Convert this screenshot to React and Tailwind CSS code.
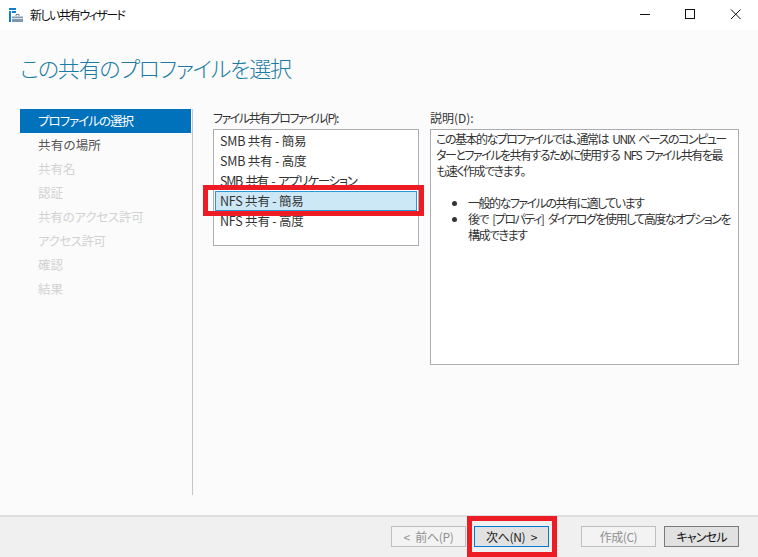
import React from 'react';

const font = { fontFamily: '"Noto Sans CJK JP", "Noto Sans", sans-serif' };

const steps = [
    { label: 'プロファイルの選択', cls: 'bg-[#0072bc] text-white tracking-[-1px]' },
    { label: '共有の場所', cls: 'text-[#555555] tracking-[0.2px]' },
    { label: '共有名', cls: 'text-[#d2d2d2]' },
    { label: '認証', cls: 'text-[#d2d2d2]' },
    { label: '共有のアクセス許可', cls: 'text-[#d2d2d2] tracking-[-0.2px]' },
    { label: 'アクセス許可', cls: 'text-[#d2d2d2] tracking-[-0.5px]' },
    { label: '確認', cls: 'text-[#d2d2d2]' },
    { label: '結果', cls: 'text-[#d2d2d2]' },
];

const profiles = [
    { label: 'SMB 共有 - 簡易', cls: 'tracking-[-0.2px]' },
    { label: 'SMB 共有 - 高度', cls: 'tracking-[-0.2px]' },
    { label: 'SMB 共有 - アプリケーション', cls: 'tracking-[-1.3px] [word-spacing:2px]' },
    { label: 'NFS 共有 - 簡易', cls: 'tracking-[-0.2px]' },
    { label: 'NFS 共有 - 高度', cls: 'tracking-[-0.2px]' },
];

const WizardIcon = () => (
    <svg width="15" height="15" viewBox="0 0 15 15" className="shrink-0">
        <rect x="0" y="0" width="7" height="2" fill="#0f7fd0" />
        <rect x="0" y="3" width="2" height="11" fill="#0f7fd0" />
        <rect x="3" y="3" width="4" height="2" fill="#0f7fd0" />
        <path d="M3 8.5 L14 8.5 L14 14 L3 14 Z" fill="#8098ad" />
        <path d="M7 8 V6.5 H10 V8" fill="none" stroke="#6d8498" strokeWidth="1" />
        <rect x="3" y="10" width="11" height="1" fill="#dce4ea" />
    </svg>
);

const Btn = ({ children, variant, className = '' }) => {
    const styles = {
        disabled: 'border-[#bfbfbf] bg-[#f3f3f3] text-[#8f8f8f]',
        focus: 'border-[#0078d7] bg-[#e1e1e1] text-[#222222]',
        normal: 'border-[#7a7a7a] bg-[#e1e1e1] text-[#111111]',
    };
    return (
        <div className={`w-[75px] h-[21px] flex items-center justify-center border text-[12px] ${styles[variant]} ${className}`}>
            {children}
        </div>
    );
};

export default function App() {
    return (
        <div className="relative w-[758px] h-[557px] overflow-hidden flex flex-col bg-white text-[12.5px] text-[#333333] [font-feature-settings:'palt']" style={font}>
            <div className="h-[30px] shrink-0 bg-white flex items-center">
                <div className="ml-[9px] mr-[6px] flex"><WizardIcon /></div>
                <span className="text-[#111111] leading-none text-[12px] tracking-[-1.6px]">新しい共有ウィザード</span>
                <div className="ml-auto flex items-center h-full">
                    <svg width="138" height="30" viewBox="0 0 138 30" fill="none" stroke="#111111" strokeWidth="1">
                        <path d="M20 14.5 H30" />
                        <rect x="65.5" y="9.5" width="9" height="9" />
                        <path d="M111 9.5 L120.5 19 M120.5 9.5 L111 19" />
                    </svg>
                </div>
            </div>

            <div className="flex-1 bg-[#fbfbfb] flex flex-col">
                <h1 className="ml-[20px] mt-[19px] h-[40px] text-[22px] leading-[36px] font-light text-[#1b7ca3] tracking-[-1.2px]">この共有のプロファイルを選択</h1>
                <div className="flex flex-1 mt-[20px] mb-[20px]">
                    <div className="ml-[20px] w-[173px] border-r border-[#c6c6c6]">
                        {steps.map((s) => (
                            <div key={s.label} className={`h-[24px] pl-[18px] flex items-center w-[171px] ${s.cls}`}>{s.label}</div>
                        ))}
                    </div>
                    <div className="ml-[20px] w-[206px] flex flex-col">
                        <div className="h-[20px] pb-[3px] flex items-center text-[#333333] text-[12px] tracking-[-1.5px]">ファイル共有プロファイル(P):</div>
                        <div className="h-[117px] border border-[#abadb3] bg-white p-px">
                            {profiles.map((p, i) => (
                                <div key={p.label} className={`h-[20px] flex items-center text-[#333333] ${p.cls} ${i === 3 ? 'bg-[#cce8f6] border border-[#2b95d6] pl-[4px]' : 'pl-[5px]'}`}>{p.label}</div>
                            ))}
                        </div>
                    </div>
                    <div className="ml-[11px] w-[309px] flex flex-col">
                        <div className="h-[20px] pb-[3px] flex items-center text-[#333333] text-[12px]">説明(D):</div>
                        <div className="h-[236px] border border-[#abadb3] bg-white px-[5px] pt-[1px] leading-[16px] text-[12px] tracking-[-1.5px] [word-spacing:3px] text-[#333333] whitespace-nowrap">
                            <p>
                                この基本的なプロファイルでは、通常は UNIX ベースのコンピュー<br />
                                ターとファイルを共有するために使用する NFS ファイル共有を最<br />
                                も速く作成できます。
                            </p>
                            <ul className="mt-[16px] list-disc pl-[32px]">
                                <li>一般的なファイルの共有に適しています</li>
                                <li>後で [プロパティ] ダイアログを使用して高度なオプションを<br />構成できます</li>
                            </ul>
                        </div>
                    </div>
                </div>
            </div>

            <div className="h-[42px] shrink-0 border-t-2 border-[#dfdfdf] bg-[#f0f0f0] flex items-center pl-[391px] pb-[1px]">
                <Btn variant="disabled" className="tracking-[-0.3px] [word-spacing:3px]">&lt; 前へ(P)</Btn>
                <div className="ml-[8px]"><Btn variant="focus" className="tracking-[-0.3px] [word-spacing:3px]">次へ(N) &gt;</Btn></div>
                <div className="ml-[32px]"><Btn variant="disabled" className="tracking-[-0.5px]">作成(C)</Btn></div>
                <div className="ml-[8px]"><Btn variant="normal" className="tracking-[-0.8px]">キャンセル</Btn></div>
            </div>

            {/* red highlight boxes over the screenshot */}
            <div className="absolute left-[203px] top-[185px] w-[221px] h-[31px] border-[5px] border-[#ed1c24]" />
            <div className="absolute left-[467px] top-[516px] w-[90px] h-[41px] border-[5px] border-[#ed1c24]" />
        </div>
    );
}
